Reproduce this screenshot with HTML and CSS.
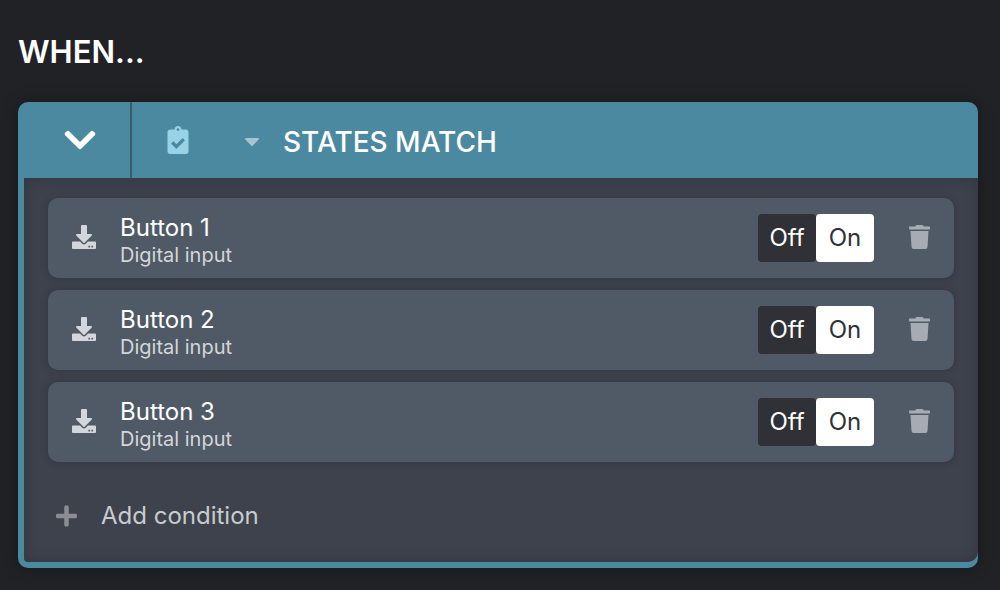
FILE: index.html
```html
<!doctype html>
<html lang="en">
<head>
<meta charset="utf-8">
<meta name="viewport" content="width=device-width,initial-scale=1">
<title>When</title>
<link rel="stylesheet" href="styles.css">
</head>
<body>
<svg class="symbols" aria-hidden="true">
	<symbol id="i-chevron" viewBox="0 0 448 512"><path d="M207.029 381.476L12.686 187.132c-9.373-9.373-9.373-24.569 0-33.941l22.667-22.667c9.357-9.357 24.522-9.375 33.901-.04L224 284.505l154.745-154.021c9.379-9.335 24.544-9.317 33.901.04l22.667 22.667c9.373 9.373 9.373 24.569 0 33.941L240.971 381.476c-9.373 9.372-24.569 9.372-33.942 0z"/></symbol>
	<symbol id="i-clipboard" viewBox="0 0 384 512"><path d="M336 64h-80c0-35.3-28.7-64-64-64s-64 28.7-64 64H48C21.5 64 0 85.5 0 112v352c0 26.5 21.5 48 48 48h288c26.5 0 48-21.5 48-48V112c0-26.5-21.5-48-48-48zM192 40c13.3 0 24 10.7 24 24s-10.7 24-24 24-24-10.7-24-24 10.7-24 24-24zm121.2 231.8l-143 141.8c-4.7 4.7-12.3 4.6-17-.1l-82.6-83.3c-4.7-4.7-4.6-12.3.1-17L99.1 285c4.7-4.7 12.3-4.6 17 .1l46 46.4 106-105.2c4.7-4.7 12.3-4.6 17 .1l28.2 28.4c4.7 4.8 4.6 12.3-.1 17z"/></symbol>
	<symbol id="i-caret" viewBox="0 0 320 512"><path d="M31.3 192h257.3c17.8 0 26.7 21.5 14.1 34.1L174.1 354.8c-7.8 7.8-20.5 7.8-28.3 0L17.2 226.1C4.6 213.5 13.5 192 31.3 192z"/></symbol>
	<symbol id="i-input" viewBox="0 0 512 512"><path d="M216 0h80c13.3 0 24 10.7 24 24v168h87.7c17.8 0 26.7 21.5 14.1 34.1L269.7 378.3c-7.5 7.5-19.8 7.5-27.3 0L90.1 226.1c-12.6-12.6-3.7-34.1 14.1-34.1H192V24c0-13.3 10.7-24 24-24zm296 376v112c0 13.3-10.7 24-24 24H24c-13.3 0-24-10.7-24-24V376c0-13.3 10.7-24 24-24h146.7l49 49c20.1 20.1 52.5 20.1 72.6 0l49-49H488c13.3 0 24 10.7 24 24zm-124 88c0-11-9-20-20-20s-20 9-20 20 9 20 20 20 20-9 20-20zm64 0c0-11-9-20-20-20s-20 9-20 20 9 20 20 20 20-9 20-20z"/></symbol>
	<symbol id="i-trash" viewBox="0 0 448 512"><path d="M432 32H312l-9.4-18.7A24 24 0 0 0 281.1 0H166.8a23.72 23.72 0 0 0-21.4 13.3L136 32H16A16 16 0 0 0 0 48v32a16 16 0 0 0 16 16h416a16 16 0 0 0 16-16V48a16 16 0 0 0-16-16zM53.2 467a48 48 0 0 0 47.9 45h245.8a48 48 0 0 0 47.9-45L416 128H32z"/></symbol>
	<symbol id="i-plus" viewBox="0 0 448 512"><path d="M416 208H272V64c0-17.67-14.33-32-32-32h-32c-17.67 0-32 14.33-32 32v144H32c-17.67 0-32 14.33-32 32v32c0 17.67 14.33 32 32 32h144v144c0 17.67 14.33 32 32 32h32c17.67 0 32-14.33 32-32V304h144c17.67 0 32-14.33 32-32v-32c0-17.67-14.33-32-32-32z"/></symbol>
</svg>

<main>
	<h1>WHEN...</h1>
	<section class="card">
		<header class="card-head">
			<button class="collapse" type="button" aria-label="Collapse"><svg><use href="#i-chevron"/></svg></button>
			<button class="kind" type="button">
				<svg class="kind-icon"><use href="#i-clipboard"/></svg>
				<svg class="caret"><use href="#i-caret"/></svg>
				<span>STATES MATCH</span>
			</button>
		</header>
		<div class="card-body">
			<ul class="rows">
				<li class="row">
					<svg class="row-icon"><use href="#i-input"/></svg>
					<div class="row-text"><div class="name">Button 1</div><div class="type">Digital input</div></div>
					<div class="toggle" role="radiogroup" aria-label="Button 1">
						<label><input type="radio" name="b1"><span>Off</span></label>
						<label><input type="radio" name="b1" checked><span>On</span></label>
					</div>
					<button class="trash" type="button" aria-label="Delete"><svg><use href="#i-trash"/></svg></button>
				</li>
				<li class="row">
					<svg class="row-icon"><use href="#i-input"/></svg>
					<div class="row-text"><div class="name">Button 2</div><div class="type">Digital input</div></div>
					<div class="toggle" role="radiogroup" aria-label="Button 2">
						<label><input type="radio" name="b2"><span>Off</span></label>
						<label><input type="radio" name="b2" checked><span>On</span></label>
					</div>
					<button class="trash" type="button" aria-label="Delete"><svg><use href="#i-trash"/></svg></button>
				</li>
				<li class="row">
					<svg class="row-icon"><use href="#i-input"/></svg>
					<div class="row-text"><div class="name">Button 3</div><div class="type">Digital input</div></div>
					<div class="toggle" role="radiogroup" aria-label="Button 3">
						<label><input type="radio" name="b3"><span>Off</span></label>
						<label><input type="radio" name="b3" checked><span>On</span></label>
					</div>
					<button class="trash" type="button" aria-label="Delete"><svg><use href="#i-trash"/></svg></button>
				</li>
			</ul>
			<button class="add" type="button"><svg><use href="#i-plus"/></svg><span>Add condition</span></button>
		</div>
	</section>
</main>
</body>
</html>
```

FILE: styles.css
```css
*{box-sizing:border-box;}
body{margin:0;background:#212226;color:#fff;font-family:Inter,"Liberation Sans",sans-serif;font-size:24px;}
svg{display:block;fill:currentColor;flex:none;}
.symbols{display:none;}
button{margin:0;padding:0;border:0;background:none;color:inherit;font:inherit;cursor:pointer;}
main{padding:32px 22px 22px 18px;}
h1{margin:0 0 30px;font-size:31px;line-height:40px;font-weight:600;}

.card{border-radius:10px;background:#4b89a1;box-shadow:0 0 16px rgba(0,0,0,.3);overflow:hidden;}
.card-head{display:flex;height:76px;}
.collapse{display:flex;align-items:center;justify-content:center;width:114px;padding-left:12px;border-right:2px solid #3a5c6b;}
.collapse svg{width:32px;height:36px;}
.kind{display:flex;flex:1;align-items:center;padding-left:35px;text-align:left;font-size:28px;line-height:36px;font-weight:500;}
.kind span{padding-top:4px;}
.kind-icon{width:22px;height:28px;color:#98d2e6;}
.caret{width:16px;height:24px;margin:2px 23px 0 55px;color:#a5c4d0;}

.card-body{margin:0 0 6px 6px;padding:20px 24px 28px;border-radius:0 0 10px 4px;background:#3e424d;box-shadow:inset 0 0 16px rgba(0,0,0,.2);}
.rows{display:grid;gap:12px;margin:0;padding:0;list-style:none;}
.row{display:flex;align-items:center;height:80px;padding:0 24px;border-radius:10px;background:#505a66;box-shadow:0 0 8px rgba(0,0,0,.2);}
.row-icon,.trash svg{height:24px;margin-bottom:2px;}
.row-icon{width:24px;color:#d3d6da;}
.row-text{flex:1;margin-left:24px;padding-top:4px;}
.name{line-height:30px;}
.type{font-size:20px;line-height:24px;color:#d3d6d9;}

.toggle{display:flex;}
.toggle label{position:relative;}
.toggle input{position:absolute;inset:0;margin:0;opacity:0;cursor:pointer;}
.toggle span{display:block;width:58px;border-radius:4px;background:#303136;line-height:48px;text-align:center;}
.toggle input:checked + span{background:#fff;color:#303136;}
.toggle input:focus-visible + span{outline:2px solid #98d2e6;}
.trash{margin-left:35px;color:#a7abb4;}
.trash svg{width:21px;}

.add{display:flex;align-items:center;gap:24px;margin-top:36px;padding-left:8px;line-height:36px;color:#c9cbce;}
.add svg{width:21px;height:24px;color:#8b8d94;}
```
